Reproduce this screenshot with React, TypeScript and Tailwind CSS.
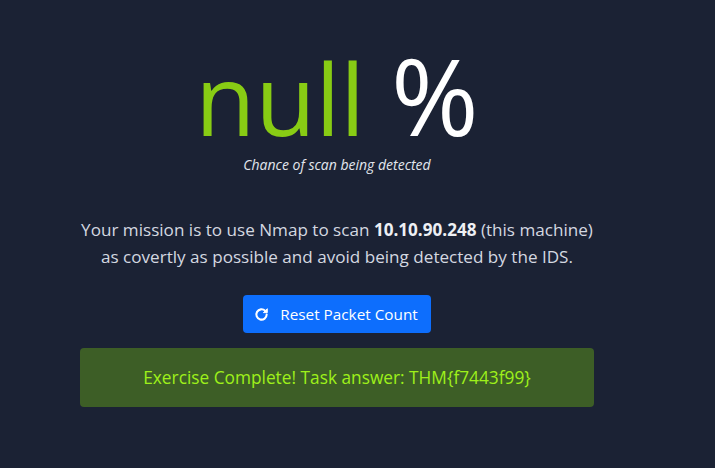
import React from "react";

export default function App() {
  const font = { fontFamily: '"Open Sans", "Noto Sans", sans-serif' };
  return (
    <div className="min-h-[468px] w-full bg-[#1b2234]" style={font}>
      <div className="ml-[80px] w-[514px] flex flex-col items-center pt-[46px]">
        <div className="flex items-baseline gap-[26px] leading-none h-[98px]">
          <span className="text-[98px] leading-none text-[#88cc14]">null</span>
          <span className="text-[106px] leading-[98px] text-white">%</span>
        </div>
        <div className="mt-[12px] text-[14px] leading-[18px] italic text-[#e2e6ee]">Chance of scan being detected</div>
        <p className="mt-[42px] text-center text-[17.1px] leading-[27px] text-[#d4d8e0]">
          Your mission is to use Nmap to scan <b className="font-bold text-[#eef0f4]">10.10.90.248</b> (this machine)
          <br />
          as covertly as possible and avoid being detected by the IDS.
        </p>
        <button className="mt-[25px] h-[38px] w-[188px] rounded-[4px] bg-[#0d6efd] text-white text-[15.3px] flex items-center justify-center gap-[11px] pr-[2px]">
          <svg width="15" height="15" viewBox="0 0 16 16" fill="none" stroke="white" strokeWidth="2.2">
            <path d="M13.5 8a5.5 5.5 0 1 1-1.6-3.9" strokeLinecap="round" />
            <path d="M14.2 1.8v4.2h-4.2z" fill="white" stroke="white" strokeWidth="1" strokeLinejoin="round" />
          </svg>
          Reset Packet Count
        </button>
        <div className="mt-[15px] w-full h-[59px] rounded-[4px] bg-[#3d5e26] flex items-center justify-center text-[17.3px] text-[#9ef01a]">
          Exercise Complete! Task answer: THM{"{"}f7443f99{"}"}
        </div>
      </div>
    </div>
  );
}
